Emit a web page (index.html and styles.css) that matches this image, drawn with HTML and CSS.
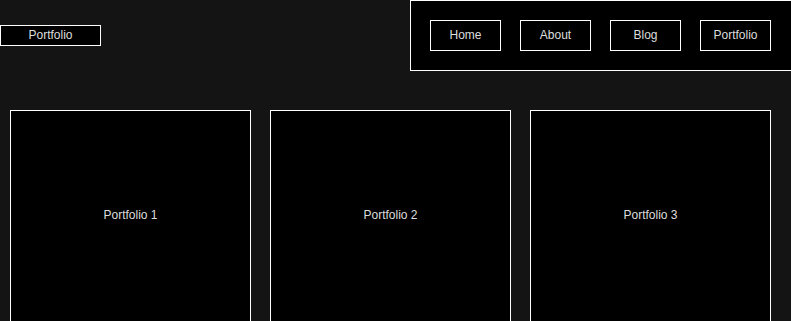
FILE: index.html
```html
<!DOCTYPE html>
<html>
<head>
  <title>Portfolio</title>
  <link rel="stylesheet" href="styles.css">
</head>
<body>
  <header class="site-header">
    <div class="logo">Portfolio</div>

    <nav class="nav">
      <a class="nav-link" href="#">Home</a>
      <a class="nav-link" href="#">About</a>
      <a class="nav-link" href="#">Blog</a>
      <a class="nav-link" href="#">Portfolio</a>
    </nav>
  </header>

  <main class="gallery">
    <div class="card">Portfolio 1</div>
    <div class="card">Portfolio 2</div>
    <div class="card">Portfolio 3</div>
  </main>
</body>
</html>
```

FILE: styles.css
```css
html,
body {
  overflow: hidden;
}

body {
  margin: 0;
  background-color: #141414;
  color: #dddddd;
  font-family: "Liberation Sans", Arial, sans-serif;
  font-size: 12px;
}

.site-header {
  display: flex;
  justify-content: space-between;
  align-items: center;
  margin-right: -1px; /* nav border runs off the right edge */
}

.logo {
  box-sizing: border-box;
  width: 101px;
  height: 21px;
  line-height: 19px;
  text-align: center;
  background-color: #000000;
  border: 1px solid #ffffff;
}

.nav {
  display: flex;
  gap: 19px;
  padding: 19px 20px 19px 19px;
  background-color: #000000;
  border: 1px solid #ffffff;
}

.nav-link {
  box-sizing: border-box;
  width: 71px;
  height: 31px;
  line-height: 29px;
  text-align: center;
  color: #dddddd;
  text-decoration: none;
  border: 1px solid #ffffff;
}

.gallery {
  display: flex;
  gap: 19px;
  padding: 39px 0 0 10px;
}

.card {
  box-sizing: border-box;
  width: 241px;
  height: 300px;
  padding-top: 97px;
  text-align: center;
  background-color: #000000;
  border: 1px solid #ffffff;
}
```
